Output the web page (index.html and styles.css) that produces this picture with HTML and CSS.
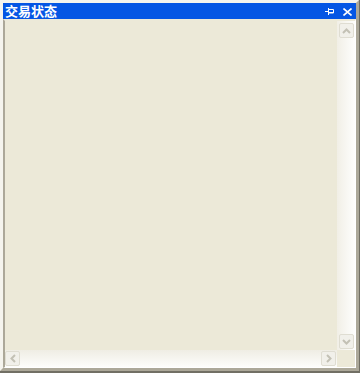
FILE: index.html
```html
<!DOCTYPE html>
<html lang="zh-CN">
<head>
    <meta charset="UTF-8">
    <title>交易状态</title>
    <link rel="stylesheet" href="styles.css">
</head>
<body>
    <div class="window">
        <div class="frame">
            <div class="caption">
                <span class="caption-text">交易状态</span>
                <div class="caption-buttons">
                    <svg class="pin" width="9" height="7" viewBox="0 0 9 7">
                        <path d="M0 3.5h3M3.5 0v7M3.5 1.5h5v3.5h-5" fill="none" stroke="#fff" stroke-width="1"/>
                        <path d="M3.5 4.5h5" stroke="#fff" stroke-width="1"/>
                    </svg>
                    <svg class="close" width="9" height="8" viewBox="0 0 9 8">
                        <path d="M0.5 0.5l8 7M8.5 0.5l-8 7" stroke="#fff" stroke-width="1.6"/>
                    </svg>
                </div>
            </div>
            <div class="pane">
                <div class="content"></div>
                <div class="vscroll">
                    <div class="sbtn">
                        <svg width="9" height="6" viewBox="0 0 9 6"><path d="M1 5l3.5-3.5L8 5" fill="none" stroke="#c3c1b5" stroke-width="2"/></svg>
                    </div>
                    <div class="sbtn">
                        <svg width="9" height="6" viewBox="0 0 9 6"><path d="M1 1l3.5 3.5L8 1" fill="none" stroke="#c3c1b5" stroke-width="2"/></svg>
                    </div>
                </div>
                <div class="hscroll">
                    <div class="sbtn">
                        <svg width="6" height="9" viewBox="0 0 6 9"><path d="M5 1L1.5 4.5L5 8" fill="none" stroke="#c3c1b5" stroke-width="2"/></svg>
                    </div>
                    <div class="sbtn">
                        <svg width="6" height="9" viewBox="0 0 6 9"><path d="M1 1l3.5 3.5L1 8" fill="none" stroke="#c3c1b5" stroke-width="2"/></svg>
                    </div>
                </div>
                <div class="corner"></div>
            </div>
        </div>
    </div>
</body>
</html>
```

FILE: styles.css
```css
body{
    margin:0;
    padding:0;
    background-color:#ece9d8;
    font-family:"Noto Sans CJK SC", sans-serif;
}
.window{
    width:360px;
    height:373px;
    box-sizing:border-box;
    border-right:1px solid #716f64;
    border-bottom:2px solid #716f64;
}
.frame{
    height:100%;
    box-sizing:border-box;
    border-style:solid;
    border-width:3px;
    border-color:#f5f4ee #aca899 #aca899 #f5f4ee;
    display:flex;
    flex-direction:column;
}
.caption{
    height:16px;
    background-color:#0556e4;
    display:flex;
    align-items:center;
    justify-content:space-between;
    padding-left:2px;
}
.caption-text{
    color:#fff;
    font-size:13px;
    font-weight:bold;
    line-height:16px;
}
.caption-buttons{
    display:flex;
    align-items:center;
    gap:9px;
    padding-right:4px;
    padding-top:1px;
}
.pane{
    flex:1;
    display:grid;
    grid-template-columns:1fr 18px;
    grid-template-rows:1fr 17px;
    border-left:2px solid #aca899;
    border-right:1px solid #fff;
    border-bottom:1px solid #fff;
    border-top:2px solid #ece9d8;
}
.content{
    background-color:#ece9d8;
}
.vscroll{
    background:linear-gradient(to right, #f1efe6, #fefefd);
    display:flex;
    flex-direction:column;
    justify-content:space-between;
    padding:2px 1px 1px 2px;
}
.hscroll{
    background:linear-gradient(to bottom, #efede4, #fdfdfb);
    display:flex;
    justify-content:space-between;
    padding:1px 1px 0 0;
}
.corner{
    background-color:#ece9d8;
}
.sbtn{
    width:15px;
    height:15px;
    box-sizing:border-box;
    border:1px solid #dfddd2;
    border-radius:2px;
    background-color:#f1f0ea;
    display:flex;
    align-items:center;
    justify-content:center;
}
```
